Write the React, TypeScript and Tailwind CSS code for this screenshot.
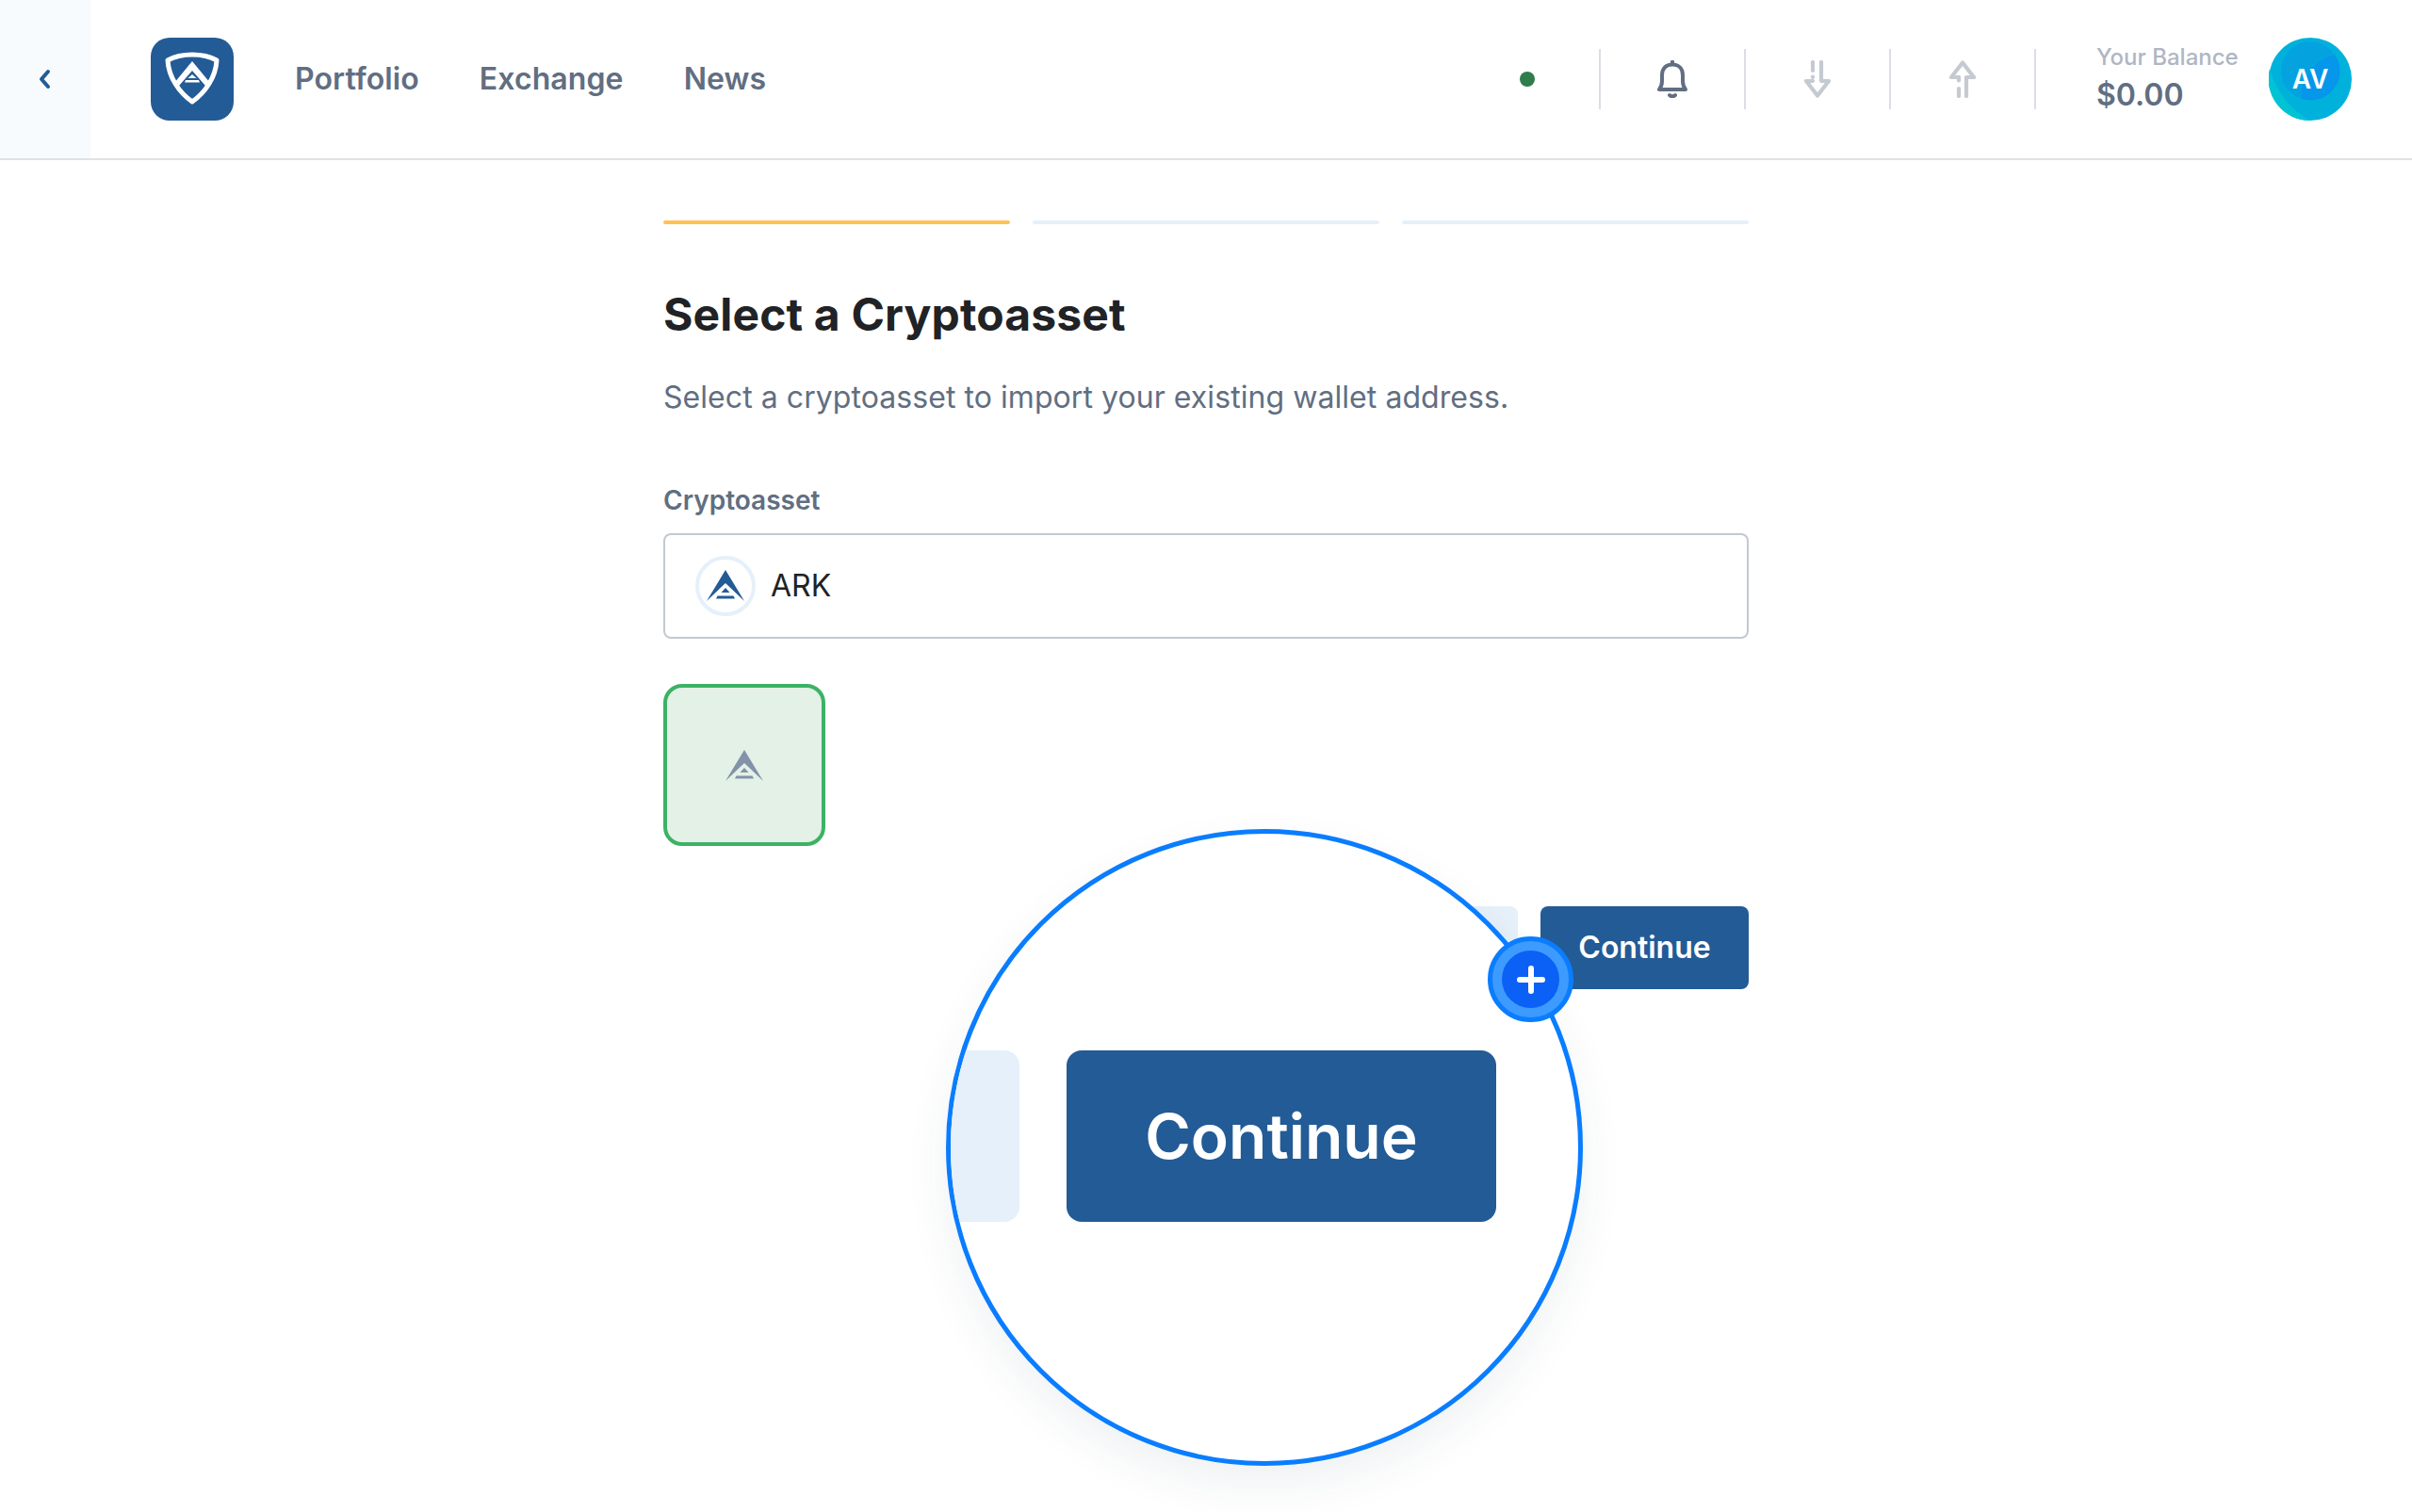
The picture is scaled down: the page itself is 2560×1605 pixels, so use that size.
import React from 'react';

const font = { fontFamily: 'Inter, "Liberation Sans", sans-serif' };

function ArkGlyph({ className }: { className: string }) {
    return (
        <svg viewBox="0 0 40 33" className={className} fill="currentColor">
            <path d="M20 0 L40 33 L20 14 L0 33 Z" />
            <path d="M20 19 L24.5 24 H15.5 Z" />
            <path d="M11.5 27.5 H28.5 L30 30.5 H10 Z" />
        </svg>
    );
}

function ShieldLogo() {
    return (
        <div className="w-[88px] h-[88px] rounded-[20px] bg-[#235b96] shrink-0">
            <svg viewBox="0 0 88 88" className="w-full h-full">
                <path
                    d="M18 24 C26 19.5 35 18 44 18 C53 18 62 19.5 70 24 C69 42 58 58 44 68 C30 58 19 42 18 24 Z"
                    fill="none"
                    stroke="#fff"
                    strokeWidth="5"
                    strokeLinejoin="round"
                />
                <path d="M44 25 L63 48 L58 51 L44 35 L30 51 L25 48 Z" fill="#fff" />
                <path d="M44 39 L48.5 43 H39.5 Z" fill="#fff" />
                <path d="M37 45 H51 L52 47.5 H36 Z" fill="#fff" />
            </svg>
        </div>
    );
}

function Avatar() {
    return (
        <div className="relative w-[88px] h-[88px] shrink-0">
            <svg viewBox="0 0 88 88" className="w-full h-full">
                <circle cx="44" cy="44" r="44" fill="#00b1dc" />
                <path d="M1 33 C8 58 25 78 44 88 A44 44 0 0 1 1 33 Z" fill="#00c3d3" />
                <circle cx="44" cy="35" r="31" fill="#04a3e0" />
                <path d="M35.3 65 C33 45 45 25 70.3 18.3 A31 31 0 0 1 35.3 65 Z" fill="#0696ea" />
            </svg>
            <div className="absolute inset-0 flex items-center justify-center text-white text-[28px] font-semibold">AV</div>
        </div>
    );
}

function HeaderCell({ children, border = true }: { children: React.ReactNode; border?: boolean }) {
    return (
        <div className={`w-[154px] h-16 flex items-center justify-center ${border ? 'border-r-2 border-[#dbdee5]' : ''}`}>
            {children}
        </div>
    );
}

function Header() {
    return (
        <header className="h-[170px] flex items-stretch border-b-2 border-[#dde2e6]">
            <div className="w-24 bg-[#f7fbfe] flex items-center justify-center">
                <svg viewBox="0 0 16 22" className="w-4 h-[22px] -ml-0.5" fill="none" stroke="#235b96" strokeWidth="4" strokeLinecap="round" strokeLinejoin="round">
                    <path d="M12 3 L5 11 L12 19" />
                </svg>
            </div>

            <div className="flex items-center ml-16">
                <ShieldLogo />
                <nav className="flex items-center gap-16 ml-[65px] text-[32px] font-semibold tracking-[0.1px] text-[#616e82]">
                    <span>Portfolio</span>
                    <span>Exchange</span>
                    <span>News</span>
                </nav>
            </div>

            <div className="flex items-center ml-auto pr-16">
                <HeaderCell>
                    <div className="w-4 h-4 rounded-full bg-[#2f7d4a]" />
                </HeaderCell>
                <HeaderCell>
                    <svg viewBox="0 0 32 40" className="w-8 h-10" fill="none" stroke="#616e82" strokeWidth="4" strokeLinecap="round" strokeLinejoin="round">
                        <path d="M16 4.5 C9 4.5 5 9 5 16 V22 C5 26 4 28.5 2 31 H30 C28 28.5 27 26 27 22 V16 C27 9 23 4.5 16 4.5 Z" />
                        <path d="M16 1.5 V4" />
                        <path d="M13 37 Q16 39.5 19 37" />
                    </svg>
                </HeaderCell>
                <HeaderCell>
                    <svg viewBox="0 0 28 40" className="w-7 h-10" fill="none" stroke="#c5cad2" strokeWidth="4.2" strokeLinecap="round" strokeLinejoin="round">
                        <path d="M9 2 V11" />
                        <path d="M9 17.5 V18" />
                        <path d="M18 2 V22 H26 L14 37.5 L2 22 H9" />
                    </svg>
                </HeaderCell>
                <HeaderCell>
                    <svg viewBox="0 0 28 40" className="w-7 h-10" fill="none" stroke="#c5cad2" strokeWidth="4.2" strokeLinecap="round" strokeLinejoin="round">
                        <path d="M10 18 H2 L14 2.5 L26 18 H18 V38" />
                        <path d="M10 30 V38" />
                        <path d="M10 18 V21.5" />
                    </svg>
                </HeaderCell>
                <div className="ml-16 flex flex-col w-[151px] -mt-[3px] whitespace-nowrap">
                    <span className="text-2xl font-medium text-[#afb6c4] leading-8">Your Balance</span>
                    <span className="text-[32px] font-semibold text-[#616e82] leading-10 mt-1">$0.00</span>
                </div>
                <div className="ml-8">
                    <Avatar />
                </div>
            </div>
        </header>
    );
}

function Magnifier() {
    return (
        <div className="absolute left-[1004px] top-[880px] w-[676px] h-[676px]">
            <div className="w-full h-full rounded-full border-[5px] border-[#0a7dff] bg-white overflow-hidden shadow-[0_20px_48px_rgba(30,50,70,0.07)]">
                <div className="flex justify-end gap-[50px] pt-[230px] pr-[87px]">
                    <div className="w-[300px] h-[182px] shrink-0 rounded-2xl bg-[#e5f0fa]" />
                    <div className="w-[456px] h-[182px] shrink-0 rounded-2xl bg-[#235b96] text-white text-[66px] font-semibold flex items-center justify-center">
                        Continue
                    </div>
                </div>
            </div>
            <div className="absolute left-[575px] top-[114px] w-[91px] h-[91px] rounded-full border-[5px] border-[#0a7dff] bg-[#3d9bff] flex items-center justify-center">
                <div className="w-[61px] h-[61px] rounded-full bg-[#0b60f5] flex items-center justify-center">
                    <svg viewBox="0 0 30 30" className="w-[30px] h-[30px]" fill="none" stroke="#fff" strokeWidth="6" strokeLinecap="round">
                        <path d="M15 3 V27 M3 15 H27" />
                    </svg>
                </div>
            </div>
        </div>
    );
}

export default function App() {
    return (
        <div className="relative w-[2560px] h-[1605px] overflow-hidden bg-white" style={font}>
            <Header />

            <main className="w-[1152px] mx-auto pt-16">
                {/* Steps */}
                <div className="grid grid-cols-3 gap-6">
                    <div className="h-1 rounded-full bg-[#ffc156]" />
                    <div className="h-1 rounded-full bg-[#e5f0fa]" />
                    <div className="h-1 rounded-full bg-[#e5f0fa]" />
                </div>

                <h1 className="mt-[68px] text-5xl leading-14 font-bold tracking-[0.15px] text-[#212225]">Select a Cryptoasset</h1>
                <p className="mt-[38px] text-[32px] leading-11 tracking-[0.06px] text-[#616e82]">
                    Select a cryptoasset to import your existing wallet address.
                </p>

                <label className="block mt-[69px] text-[28px] leading-9 font-semibold text-[#616e82]">Cryptoasset</label>
                <div className="mt-[17px] h-28 rounded-lg border-2 border-[#c3c9d0] flex items-center pl-8">
                    <div className="w-16 h-16 rounded-full border-4 border-[#e5f0fa] flex items-center justify-center">
                        <ArkGlyph className="w-10 h-[33px] text-[#235b96] -mt-0.5" />
                    </div>
                    <span className="ml-4 text-[32px] text-[#212225]">ARK</span>
                </div>

                <div className="mt-12 w-[172px] h-[172px] rounded-[20px] border-4 border-[#3cb265] bg-[#e3f1e6] flex items-center justify-center">
                    <ArkGlyph className="w-10 h-[33px] text-[#8392a9]" />
                </div>

                <div className="mt-16 flex justify-end gap-6">
                    <button className="w-[150px] h-[88px] rounded-lg bg-[#e5f0fa] text-[32px] font-semibold text-[#235b96]">Back</button>
                    <button className="w-[221px] h-[88px] rounded-lg bg-[#235b96] text-[32px] font-semibold text-white">Continue</button>
                </div>
            </main>

            <Magnifier />
        </div>
    );
}
